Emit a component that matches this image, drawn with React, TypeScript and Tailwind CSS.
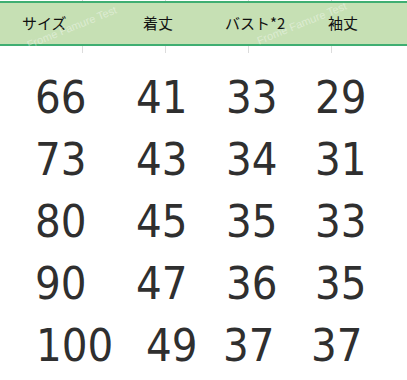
import React from "react";

const rows: [string, string, string, string][] = [
  ["66", "41", "33", "29"],
  ["73", "43", "34", "31"],
  ["80", "45", "35", "33"],
  ["90", "47", "36", "35"],
];

function GridTicks({ h, color }: { h: string; color: string }) {
  return (
    <div className={`flex ${h}`}>
      <div className="w-[82px]" />
      <div className={`w-[1px] ${color}`} />
      <div className="w-[82px]" />
      <div className={`w-[1px] ${color}`} />
      <div className="w-[82px]" />
      <div className={`w-[1px] ${color}`} />
      <div className="w-[82px]" />
      <div className={`w-[1px] ${color}`} />
    </div>
  );
}

export default function App() {
  return (
    <div className="relative w-[407px] h-[380px] bg-white overflow-hidden">
      <GridTicks h="h-[1px]" color="bg-[#d4d4d4]" />
      <div
        className="relative flex items-center h-[45px] bg-[#c6e0b4] border-y-2 border-[#3fae72] text-[15px] text-[#111]"
        style={{ fontFamily: '"Noto Sans CJK JP", "Noto Sans", sans-serif' }}
      >
        <span className="ml-[22px] w-[121px]">サイズ</span>
        <span className="w-[82px]">着丈</span>
        <span className="w-[103px]">バスト*2</span>
        <span>袖丈</span>
        <span
          className="absolute left-[24px] top-[16px] text-[11px] text-white/40 -rotate-[22deg] whitespace-nowrap pointer-events-none"
          style={{ fontFamily: '"Liberation Sans", sans-serif' }}
        >
          Frome Famure Test
        </span>
        <span
          className="absolute left-[254px] top-[12px] text-[11px] text-white/40 -rotate-[22deg] whitespace-nowrap pointer-events-none"
          style={{ fontFamily: '"Liberation Sans", sans-serif' }}
        >
          Frome Famure Test
        </span>
      </div>
      <GridTicks h="h-[7px]" color="bg-[#dcdcdc]" />
      <div
        className="flex flex-col pt-[14px] text-[45px] leading-[62px] text-[#2f2f2f]"
        style={{ fontFamily: '"DejaVu Sans Condensed", "Noto Sans", sans-serif' }}
      >
        {rows.map((r, i) => (
          <div key={i} className="flex">
            <span className="ml-[35px] w-[101px]">{r[0]}</span>
            <span className="w-[90px]">{r[1]}</span>
            <span className="w-[89px]">{r[2]}</span>
            <span>{r[3]}</span>
          </div>
        ))}
        <div className="flex">
          <span className="ml-[36px] w-[110px]">100</span>
          <span className="w-[77px]">49</span>
          <span className="w-[88px]">37</span>
          <span>37</span>
        </div>
      </div>
    </div>
  );
}
